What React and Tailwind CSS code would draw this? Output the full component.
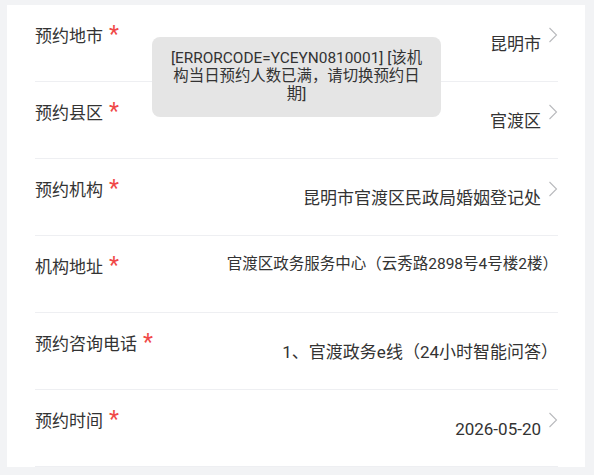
import React from "react";

const FONT = { fontFamily: 'Roboto, "Noto Sans CJK SC", "Noto Sans", sans-serif' };

function Chevron() {
  return (
    <svg width="10" height="16" viewBox="0 0 10 16" className="flex-none ml-[7px] mt-[3px]">
      <path d="M1.5 1 L8.5 8 L1.5 15" fill="none" stroke="#b9babd" strokeWidth="1.1" />
    </svg>
  );
}

function Row({ label, value, chevron, small }) {
  return (
    <div className="flex items-start h-[77px] border-b border-[#eeeff2] pt-[19px]">
      <div className="flex-none text-[17px] leading-6 text-[#333333] flex items-start">
        <span>{label}</span>
        <span className="ml-[6px] -mt-[1px] text-[23px] leading-none text-[#f04848]">*</span>
      </div>
      {small ? (
        <div className="flex-1 text-right text-[15.5px] leading-[18px] text-[#333333] whitespace-nowrap">
          {value}
        </div>
      ) : (
        <div className="flex-1 text-right text-[17px] leading-6 text-[#333333] mt-2 whitespace-nowrap">
          {value}
        </div>
      )}
      {chevron && <Chevron />}
    </div>
  );
}

export default function App() {
  const rows = [
    { label: "预约地市", value: "昆明市", chevron: true },
    { label: "预约县区", value: "官渡区", chevron: true },
    { label: "预约机构", value: "昆明市官渡区民政局婚姻登记处", chevron: true },
    { label: "机构地址", value: "官渡区政务服务中心（云秀路2898号4号楼2楼）", small: true },
    { label: "预约咨询电话", value: "1、官渡政务e线（24小时智能问答）" },
    { label: "预约时间", value: "2026-05-20", chevron: true },
  ];
  return (
    <div className="relative w-[594px] h-[475px] bg-[#f2f3f5] overflow-hidden pl-[7px] pr-[9px] pt-[5px]" style={FONT}>
      <div className="bg-white h-[462px] pl-[28px] pr-[27px]">
        {rows.map((r) => (
          <Row key={r.label} {...r} />
        ))}
      </div>
      <div className="absolute left-[152px] top-[37px] w-[289px] h-[80px] rounded-lg bg-[#e5e5e5] pt-[12px] text-center text-[15.4px] leading-[18px] text-[#333333] whitespace-nowrap">
        <div>[ERRORCODE=YCEYN0810001] [该机</div>
        <div>构当日预约人数已满，请切换预约日</div>
        <div>期]</div>
      </div>
    </div>
  );
}
